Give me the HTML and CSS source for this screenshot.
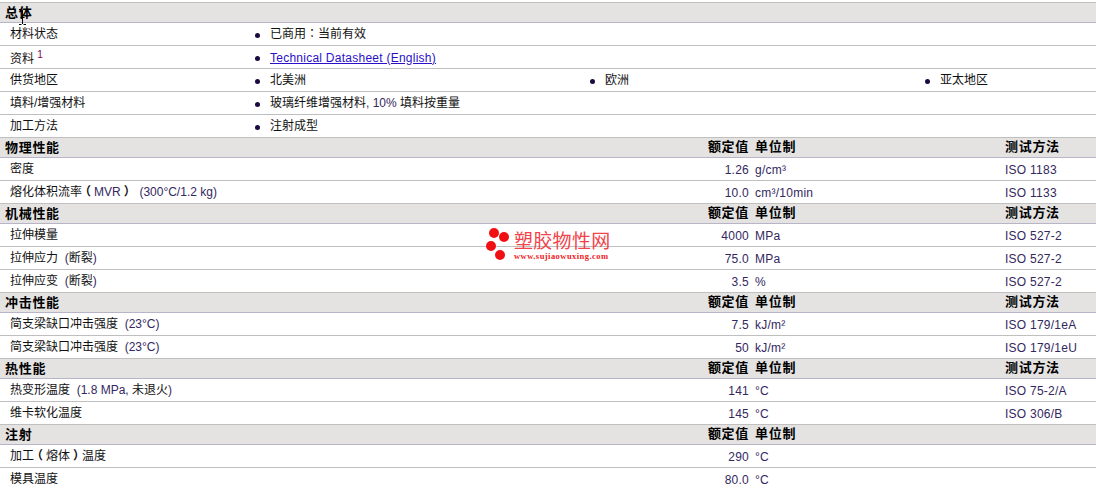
FILE: index.html
```html
<!DOCTYPE html>
<html lang="zh">
<head>
<meta charset="utf-8">
<title>物性表</title>
<link rel="stylesheet" href="styles.css">
</head>
<body>
<main class="sheet">
  <div class="head"><span class="h-name">总体</span></div>
  <div class="row"><span class="name">材料状态</span><span class="item">已商用<span class="tc" lang="zh-Hant">：</span>当前有效</span></div>
  <div class="row"><span class="name with-note">资料 <sup class="note">1</sup></span><span class="item link-item"><a href="#">Technical Datasheet (English)</a></span></div>
  <div class="row"><span class="name">供货地区</span><span class="item">北美洲</span><span class="item">欧洲</span><span class="item last">亚太地区</span></div>
  <div class="row"><span class="name">填料/增强材料</span><span class="item wide">玻璃纤维增强材料<span class="lat">, 10%</span> 填料按重量</span></div>
  <div class="row"><span class="name">加工方法</span><span class="item">注射成型</span></div>

  <div class="head"><span class="h-name">物理性能</span><span class="val">额定值</span><span class="unit">单位制</span><span class="method">测试方法</span></div>
  <div class="row"><span class="name">密度</span><span class="val">1.26</span><span class="unit">g/cm³</span><span class="method">ISO 1183</span></div>
  <div class="row"><span class="name">熔化体积流率<span class="paren">（</span><span class="lat">MVR</span><span class="paren">）</span>&nbsp; <span class="lat">(300°C/1.2 kg)</span></span><span class="val">10.0</span><span class="unit">cm³/10min</span><span class="method">ISO 1133</span></div>

  <div class="head"><span class="h-name">机械性能</span><span class="val">额定值</span><span class="unit">单位制</span><span class="method">测试方法</span></div>
  <div class="row"><span class="name">拉伸模量</span><span class="val">4000</span><span class="unit">MPa</span><span class="method">ISO 527-2</span></div>
  <div class="row"><span class="name">拉伸应力&nbsp; <span class="lat">(</span>断裂<span class="lat">)</span></span><span class="val">75.0</span><span class="unit">MPa</span><span class="method">ISO 527-2</span></div>
  <div class="row"><span class="name">拉伸应变&nbsp; <span class="lat">(</span>断裂<span class="lat">)</span></span><span class="val">3.5</span><span class="unit">%</span><span class="method">ISO 527-2</span></div>

  <div class="head"><span class="h-name">冲击性能</span><span class="val">额定值</span><span class="unit">单位制</span><span class="method">测试方法</span></div>
  <div class="row"><span class="name">简支梁缺口冲击强度&nbsp; <span class="lat">(23°C)</span></span><span class="val">7.5</span><span class="unit">kJ/m²</span><span class="method">ISO 179/1eA</span></div>
  <div class="row"><span class="name">简支梁缺口冲击强度&nbsp; <span class="lat">(23°C)</span></span><span class="val">50</span><span class="unit">kJ/m²</span><span class="method">ISO 179/1eU</span></div>

  <div class="head"><span class="h-name">热性能</span><span class="val">额定值</span><span class="unit">单位制</span><span class="method">测试方法</span></div>
  <div class="row"><span class="name">热变形温度&nbsp; <span class="lat">(1.8 MPa, </span>未退火<span class="lat">)</span></span><span class="val">141</span><span class="unit">°C</span><span class="method">ISO 75-2/A</span></div>
  <div class="row"><span class="name">维卡软化温度</span><span class="val">145</span><span class="unit">°C</span><span class="method">ISO 306/B</span></div>

  <div class="head"><span class="h-name">注射</span><span class="val">额定值</span><span class="unit">单位制</span></div>
  <div class="row"><span class="name">加工<span class="paren">（</span>熔体<span class="paren">）</span>温度</span><span class="val">290</span><span class="unit">°C</span></div>
  <div class="row"><span class="name">模具温度</span><span class="val">80.0</span><span class="unit">°C</span></div>
</main>

<div class="mark">
  <svg class="mark-dots" width="28" height="34" viewBox="0 0 28 34"><circle cx="8" cy="6" r="5"/><circle cx="18" cy="10" r="5"/><circle cx="5" cy="19" r="5"/><circle cx="14" cy="28" r="5"/></svg>
  <div class="mark-text"><div class="mark-cn">塑胶物性网</div><div class="mark-url">www.sujiaowuxing.com</div></div>
</div>
<svg class="cursor" width="9" height="16" viewBox="0 0 9 16"><path d="M1 .5h2.500M5.500 .5H8M4.500 1v14M1 15.500h2.500M5.500 15.500H8M2.500 8.500h4" stroke="#000" fill="none"/></svg>
</body>
</html>
```
FILE: styles.css
```css
html, body { margin: 0; padding: 0; background: #fff; }
body {
  width: 1096px; height: 490px; overflow: hidden; position: relative;
  font: 12px/1 "Liberation Sans", "Noto Sans CJK SC", sans-serif;
  color: #111;
}
.sheet { padding-top: 2px; display: flex; flex-direction: column; }
.head, .row { display: flex; align-items: center; box-sizing: border-box; position: relative; }
.head {
  height: 20px; background: #e4e3e2; border-top: 1px solid #c0c0c0; font-weight: 700; color: #000;
  font-size: 13px; letter-spacing: .7px;
}
.head .val, .head .unit, .head .method { margin-top: -2px; }
.row { height: 23px; border-top: 1px solid #bfbfbf; padding-top: 1px; }
.head + .row { border-top-color: #b9b5c8; }
.h-name { position: absolute; left: 5px; }
.name { position: absolute; left: 10px; margin-top: -2px; }
.name.with-note { margin-top: 2px; }
.lat { color: #33285e; }
.tc { font-family: "Noto Sans CJK TC", sans-serif; }
.paren { font-weight: 700; font-feature-settings: "halt"; padding: 0 3px; }
.note { font-size: 10px; color: #800060; vertical-align: 5px; line-height: 0; }
.item { position: relative; flex: none; width: 335px; padding-left: 15px; box-sizing: border-box; margin-top: -2px; }
.item::before { content: ""; position: absolute; left: 0; top: 50%; margin-top: -1px; width: 5px; height: 5px; border-radius: 50%; background: #1a0a40; }
.item.link-item { margin-top: 0; }
.item.link-item::before { margin-top: -2px; }
.item.last { width: 171px; }
.name + .item { margin-left: 255px; }
.wide { width: 600px; }
a { color: #2a10c8; letter-spacing: .25px; }
.row .val, .row .unit, .row .method { color: #33285e; letter-spacing: .25px; }
.val { position: absolute; right: 347px; text-align: right; }
.unit { position: absolute; left: 755px; }
.method { position: absolute; left: 1005px; }
.mark { position: absolute; left: 486px; top: 227px; display: flex; color: #f2444a; }
.mark-dots { fill: #f01014; flex: none; }
.mark-text { padding-top: 5px; }
.mark-cn { font-size: 19px; line-height: 20px; letter-spacing: .3px; }
.mark-url { font: 700 8.500px/9px "Liberation Serif", serif; letter-spacing: .45px; color: #ee2226; }
.cursor { position: absolute; left: 18px; top: 9px; }
```
